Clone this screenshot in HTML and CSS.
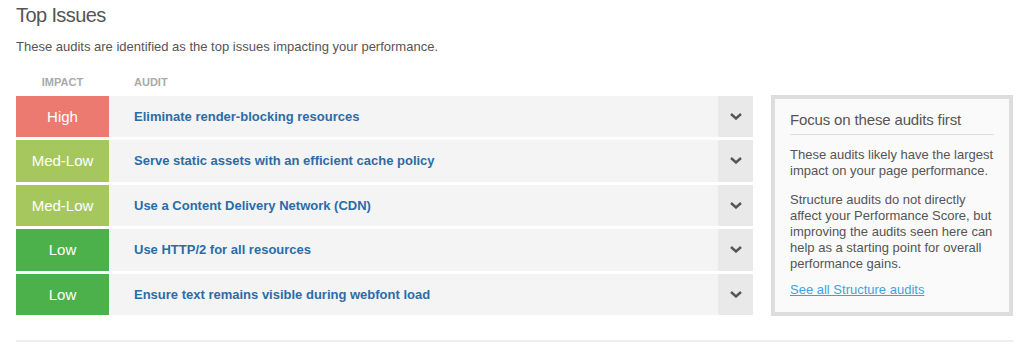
FILE: index.html
```html
<!DOCTYPE html>
<html lang="en">
<head>
    <meta charset="UTF-8">
    <title>Top Issues</title>
    <link rel="stylesheet" href="styles.css">
</head>
<body>

    <!-- Section header -->
    <h2 class="section-title">Top Issues</h2>
    <p class="section-intro">These audits are identified as the top issues impacting your performance.</p>

    <div class="col-heads">
        <span class="col-impact">Impact</span>
        <span class="col-audit">Audit</span>
    </div>

    <div class="issues-layout">
        <!-- Audit list -->
        <div class="issue-list">
            <div class="issue-row">
                <div class="impact impact-high">High</div>
                <div class="audit-name">Eliminate render-blocking resources</div>
                <div class="toggle"><svg width="12" height="7" viewBox="0 0 12 7"><polyline points="1,1 6,5.5 11,1" /></svg></div>
            </div>
            <div class="issue-row">
                <div class="impact impact-medlow">Med-Low</div>
                <div class="audit-name">Serve static assets with an efficient cache policy</div>
                <div class="toggle"><svg width="12" height="7" viewBox="0 0 12 7"><polyline points="1,1 6,5.5 11,1" /></svg></div>
            </div>
            <div class="issue-row">
                <div class="impact impact-medlow">Med-Low</div>
                <div class="audit-name">Use a Content Delivery Network (CDN)</div>
                <div class="toggle"><svg width="12" height="7" viewBox="0 0 12 7"><polyline points="1,1 6,5.5 11,1" /></svg></div>
            </div>
            <div class="issue-row">
                <div class="impact impact-low">Low</div>
                <div class="audit-name">Use HTTP/2 for all resources</div>
                <div class="toggle"><svg width="12" height="7" viewBox="0 0 12 7"><polyline points="1,1 6,5.5 11,1" /></svg></div>
            </div>
            <div class="issue-row">
                <div class="impact impact-low">Low</div>
                <div class="audit-name">Ensure text remains visible during webfont load</div>
                <div class="toggle"><svg width="12" height="7" viewBox="0 0 12 7"><polyline points="1,1 6,5.5 11,1" /></svg></div>
            </div>
        </div>

        <!-- Side note -->
        <div class="focus-box">
            <h3>Focus on these audits first</h3>
            <p>These audits likely have the largest impact on your page performance.</p>
            <p>Structure audits do not directly affect your Performance Score, but improving the audits seen here can help as a starting point for overall performance gains.</p>
            <a href="#" class="focus-link">See all Structure audits</a>
        </div>
    </div>

    <div class="divider"></div>

</body>
</html>
```

FILE: styles.css
```css
body {
    margin: 0;
    padding: 0 11px 0 16px;
    font-family: "Liberation Sans", Arial, sans-serif;
    color: #555;
    background: #fff;
}
/* Header */
.section-title {
    margin: 3px 0 0;
    font-size: 20px;
    line-height: 24px;
    font-weight: normal;
    letter-spacing: -0.6px;
    color: #555;
}
.section-intro {
    margin: 11.5px 0 0;
    font-size: 13px;
    line-height: 16px;
}
/* Column headings */
.col-heads {
    display: flex;
    margin: 20px 0 7px;
    height: 14px;
    font-size: 11px;
    line-height: 14px;
    font-weight: bold;
    text-transform: uppercase;
    color: #aaa;
}
.col-impact {
    width: 93px;
    text-align: center;
}
.col-audit {
    padding-left: 25px;
}
/* Table + side box */
.issues-layout {
    display: flex;
    gap: 18px;
}
.issue-list {
    width: 737px;
    display: flex;
    flex-direction: column;
    gap: 3px;
}
.issue-row {
    display: flex;
    height: 41.5px;
    background-color: #f4f4f4;
}
.impact {
    width: 93px;
    display: flex;
    align-items: center;
    justify-content: center;
    color: #fff;
    font-size: 15px;
}
.impact-high {
    background-color: #ec7a71; /* Red */
}
.impact-medlow {
    background-color: #a6c75e; /* Light green */
}
.impact-low {
    background-color: #4cb14b; /* Green */
}
.audit-name {
    flex: 1;
    display: flex;
    align-items: center;
    padding-left: 25px;
    font-size: 13px;
    font-weight: bold;
    color: #2b6ca8;
}
.toggle {
    width: 35px;
    display: flex;
    align-items: center;
    justify-content: center;
    background-color: #e9e9e9;
}
.toggle svg polyline {
    fill: none;
    stroke: #555;
    stroke-width: 2.4;
}
/* Focus box */
.focus-box {
    width: 242px;
    margin-top: -1px;
    margin-bottom: -0.5px;
    padding: 12px 15px 0;
    box-sizing: border-box;
    border: 4px solid #ddd;
    background-color: #fafafa;
}
.focus-box h3 {
    margin: 0;
    padding-bottom: 5px;
    border-bottom: 1px solid #ddd;
    font-size: 15px;
    line-height: 18px;
    font-weight: normal;
    letter-spacing: -0.15px;
    color: #555;
}
.focus-box p {
    margin: 12px 0 0;
    font-size: 13px;
    line-height: 16px;
}
.focus-box p + p {
    margin-top: 13px;
}
.focus-link {
    display: block;
    margin-top: 10px;
    font-size: 13px;
    line-height: 16px;
    color: #3fa2de;
}
/* Bottom rule */
.divider {
    margin-top: 25px;
    height: 2px;
    background-color: #eee;
}
```
